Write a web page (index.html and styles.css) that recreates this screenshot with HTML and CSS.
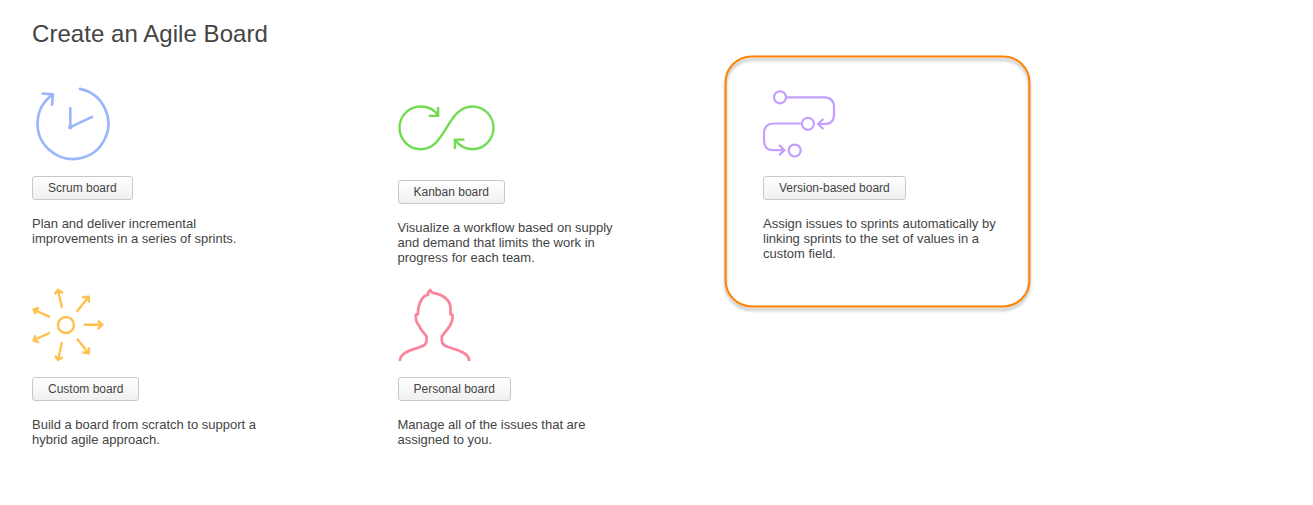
FILE: index.html
```html
<!DOCTYPE html>
<html lang="en">
<head>
<meta charset="utf-8">
<title>Create an Agile Board</title>
<link rel="stylesheet" href="styles.css">
</head>
<body>
<main class="page">
  <h1 class="title">Create an Agile Board</h1>
  <div class="boards">
    <section class="board">
      <svg class="icon blue" width="90" height="80" viewBox="32 84 90 80">
        <path d="M79.8 88.9A35.4 35.4 0 1 1 52.7 94.6M42.5 93.5L53 94.4L52 104.7M70.3 108.3V127.2L92.2 116.8"/>
        <circle class="dot" cx="70.3" cy="127.3" r="2.2"/>
      </svg>
      <button class="btn">Scrum board</button>
      <p class="text">Plan and deliver incremental<br>improvements in a series of sprints.</p>
    </section>
    <section class="board tall">
      <svg class="icon green" width="110" height="84" viewBox="397.5 84 110 84">
        <path d="M437.8 115.8C434 109.5 427.5 106.5 420 106.5A21 21.35 0 0 0 420 149.2C446 149.2 446 106.5 472 106.5A21 21.35 0 0 1 472 149.2C464.5 149.2 458.5 145.5 454.4 139.8M437.6 107V115.9H428.2M454.4 149V139.6H464"/>
      </svg>
      <button class="btn">Kanban board</button>
      <p class="text">Visualize a workflow based on supply<br>and demand that limits the work in<br>progress for each team.</p>
    </section>
    <section class="board">
      <svg class="highlight" width="330" height="270" viewBox="713 46 330 270">
        <rect x="725.6" y="56.4" width="303.8" height="250" rx="26"/>
      </svg>
      <svg class="icon purple" width="90" height="80" viewBox="763 84 90 80">
        <circle cx="780" cy="97.3" r="6"/>
        <circle cx="807.9" cy="123.8" r="6"/>
        <circle cx="794.7" cy="150.6" r="6"/>
        <path d="M786.3 97.3H824Q834 97.3 834 107.3V114Q834 124 825 124H818.5M822.7 119.5L818 124L822.7 128.4M801.6 123.5H774Q764 123.5 764 133.5V140.2Q764 150.2 773 150.2H784M779.7 145.6L784.5 150.2L779.7 154.6"/>
      </svg>
      <button class="btn">Version-based board</button>
      <p class="text">Assign issues to sprints automatically by<br>linking sprints to the set of values in a<br>custom field.</p>
    </section>
    <section class="board">
      <svg class="icon yellow" width="90" height="80" viewBox="32.3 285 90 80">
        <circle cx="66.2" cy="325" r="8"/>
        <path d="M84 324.8H102M98 320.5L102.5 324.8L98 329.2M77 311.7L89 296.7M82.3 297.3L89 296.7L89.4 302.7M62.3 308L58.3 290M55 294.3L58.3 289.9L63.3 293M50.3 317.2L33.9 309.5M39.3 308L33.9 309.5L36.3 314.3M50.3 332.7L33.9 340.5M36 335.3L33.9 340.5L39.3 342.3M62.2 342L58.4 360M55.3 355.7L58.4 360L63 357.3M77.3 338.7L89 353.3M82.7 352.2L89 353.3L89.4 347.3"/>
      </svg>
      <button class="btn">Custom board</button>
      <p class="text">Build a board from scratch to support a<br>hybrid agile approach.</p>
    </section>
    <section class="board">
      <svg class="icon pink" width="90" height="80" viewBox="397.8 285 90 80">
        <path transform="translate(390 280) scale(.33333)" d="M29 243C29 217 67 209 90 201C108 195 110 190 109 169L90 145L87 137C79 130 76 117 77 104L83 103C83 76 90 60 103 48L114 44L113 38L120 30L126 38C164 45 180 61 181 85V103L187 105C188 118 185 128 178 139L155 169C154 190 156 195 174 201C197 209 237 217 237 243"/>
      </svg>
      <button class="btn">Personal board</button>
      <p class="text">Manage all of the issues that are<br>assigned to you.</p>
    </section>
  </div>
</main>
</body>
</html>
```
FILE: styles.css
```css
body {
  margin: 0;
  background: #fff;
  color: #444;
  font-family: "Liberation Sans", Arial, sans-serif;
}
.page { padding: 20px 32px 0; }
.title {
  margin: 0;
  font-size: 24px;
  font-weight: 400;
  line-height: 28px;
  letter-spacing: .05px;
}
.boards {
  display: grid;
  grid-template-columns: repeat(3, 365.5px);
  grid-template-rows: 201px auto;
  margin-top: 36px;
}
.board {
  position: relative;
  display: flex;
  flex-direction: column;
  align-items: flex-start;
}
.icon {
  display: block;
  flex: none;
  margin-bottom: 12px;
  fill: none;
  stroke-width: 2.4;
  stroke-linecap: round;
  stroke-linejoin: round;
}
.blue { stroke: #99b5fc; stroke-width: 2.6; }
.blue .dot { fill: #99b5fc; stroke: none; }
.green { stroke: #72dc50; stroke-linecap: butt; stroke-linejoin: miter; }
.purple { stroke: #c49fff; stroke-width: 2.2; }
.yellow { stroke: #ffc04f; stroke-linecap: butt; stroke-linejoin: miter; stroke-width: 2.4; }
.pink { stroke: #f9849e; stroke-width: 8.2; stroke-linecap: butt; }
.btn {
  box-sizing: border-box;
  height: 24px;
  padding: 0 15px;
  border: 1px solid #c8c8c8;
  border-radius: 3px;
  background: linear-gradient(#fff, #f0f0f0);
  color: #444;
  font: 12px/21px "Liberation Sans", Arial, sans-serif;
}
.text {
  margin: 16px 0 0;
  font-size: 13px;
  line-height: 15px;
  white-space: nowrap;
}
.highlight {
  position: absolute;
  left: -50px;
  top: -38px;
  fill: none;
  stroke: #ff8200;
  stroke-width: 2;
  filter: drop-shadow(0 3px 1.5px rgba(0, 0, 0, .3));
  pointer-events: none;
}
```
